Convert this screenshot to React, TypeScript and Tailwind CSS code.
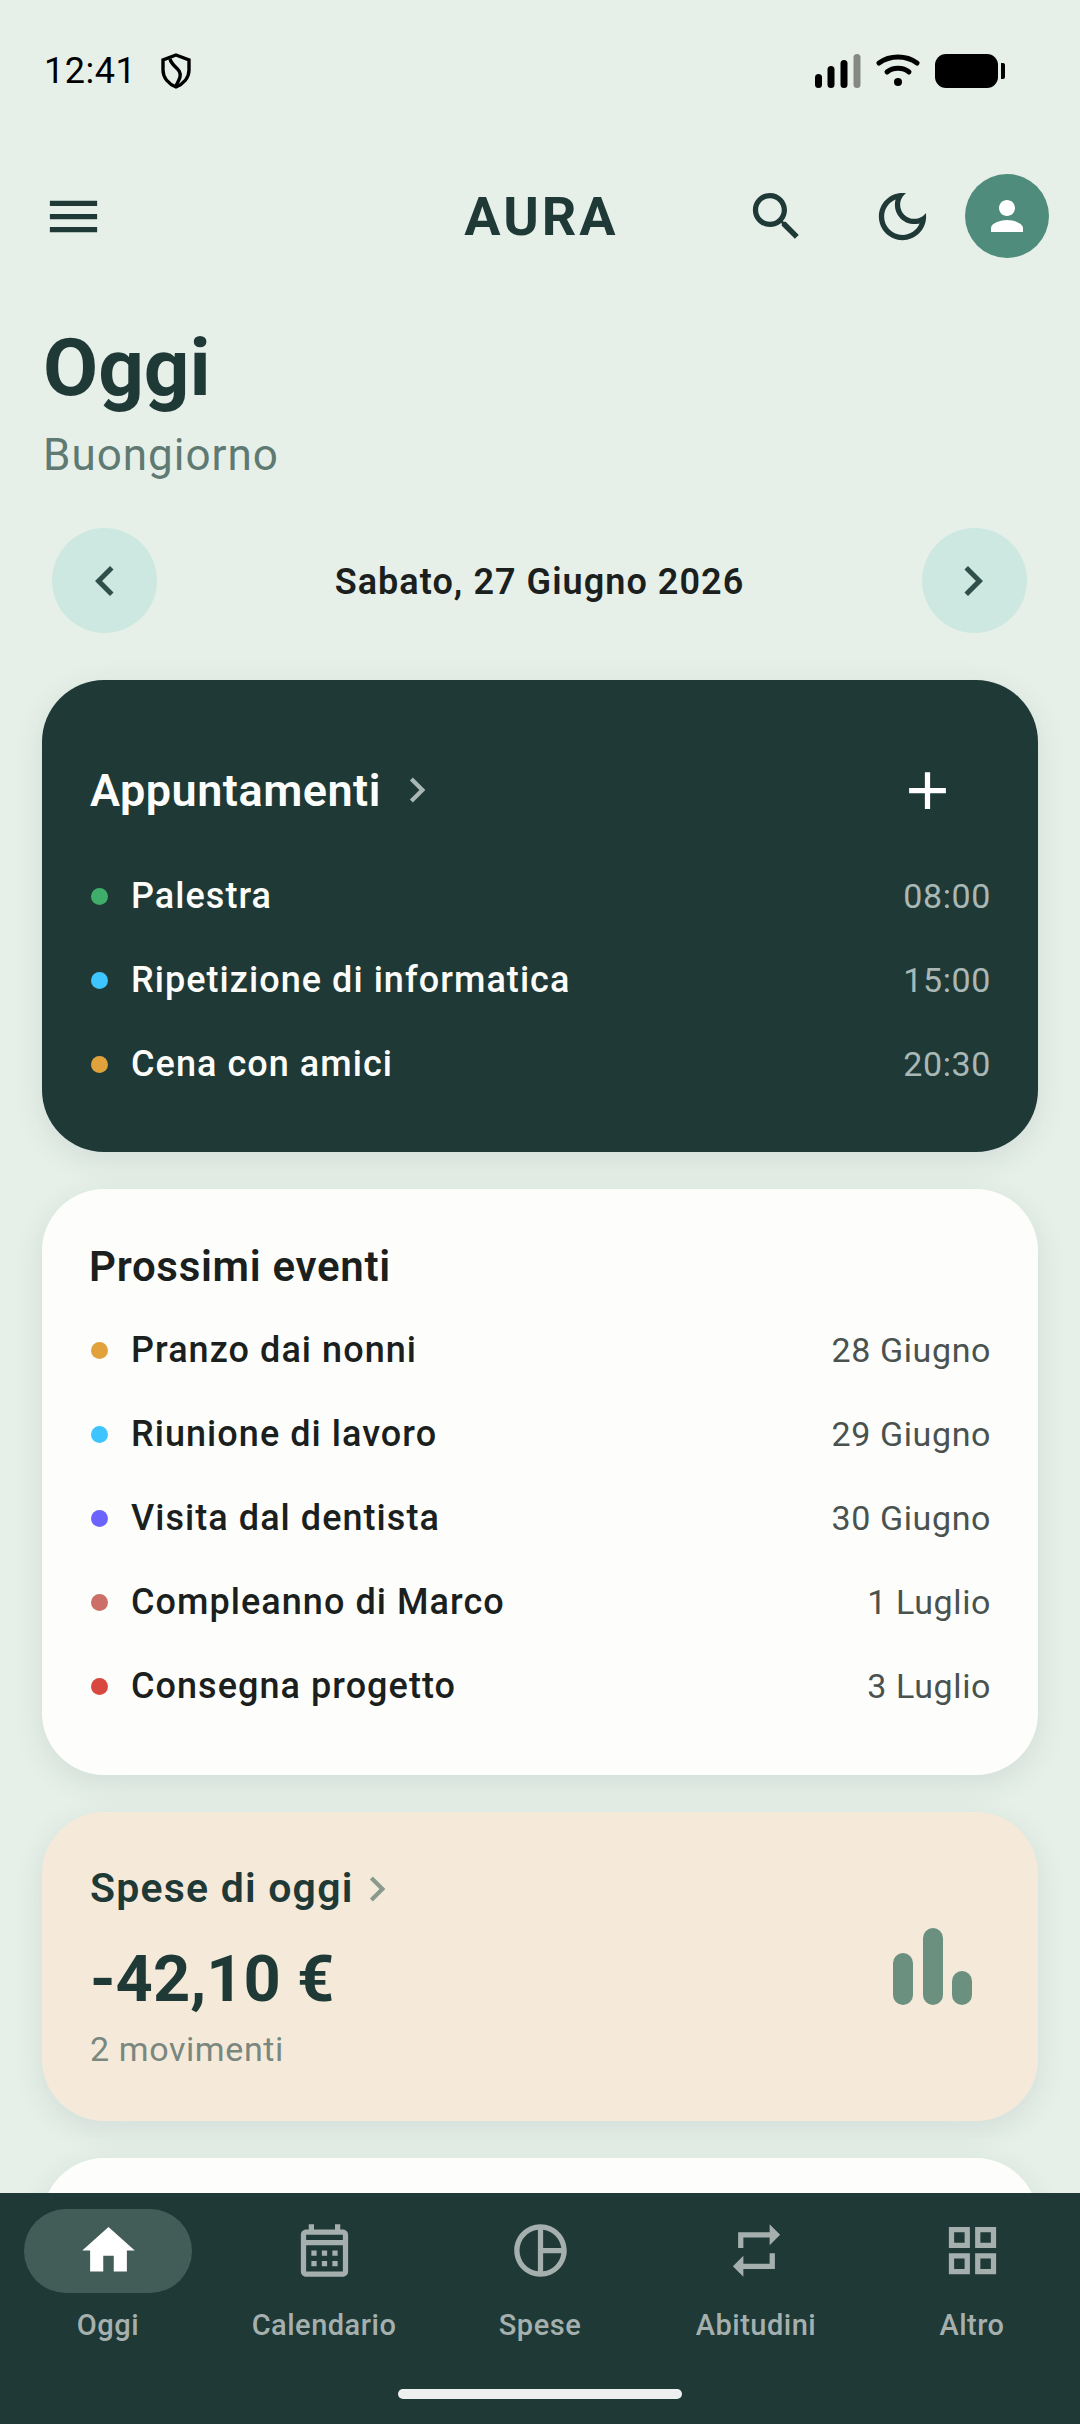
import React from 'react';

const ROBOTO = "font-['Roboto',sans-serif]";

const Icon = ({ d, className }: { d: string; className?: string }) => (
  <svg viewBox="0 0 24 24" fill="currentColor" className={className}>
    <path d={d} />
  </svg>
);

const paths = {
  menu: 'M3 18h18v-2H3v2zm0-5h18v-2H3v2zm0-7v2h18V6H3z',
  search:
    'M15.5 14h-.79l-.28-.27C15.41 12.59 16 11.11 16 9.5 16 5.91 13.09 3 9.5 3S3 5.91 3 9.5 5.91 16 9.5 16c1.61 0 3.09-.59 4.23-1.57l.27.28v.79l5 4.99L20.49 19l-4.99-5zm-6 0C7.01 14 5 11.99 5 9.5S7.01 5 9.5 5 14 7.01 14 9.5 11.99 14 9.5 14z',
  moon: 'M9.37 5.51C9.19 6.15 9.1 6.82 9.1 7.5c0 4.08 3.32 7.4 7.4 7.4.68 0 1.35-.09 1.99-.27C17.45 17.19 14.93 19 12 19c-3.86 0-7-3.14-7-7 0-2.93 1.81-5.45 4.37-6.49zM12 3c-4.97 0-9 4.03-9 9s4.03 9 9 9 9-4.03 9-9c0-.46-.04-.92-.1-1.36-.98 1.37-2.58 2.26-4.4 2.26-2.98 0-5.4-2.42-5.4-5.4 0-1.81.89-3.42 2.26-4.4C12.92 3.04 12.46 3 12 3z',
  person: 'M12 12c2.21 0 4-1.79 4-4s-1.79-4-4-4-4 1.79-4 4 1.79 4 4 4zm0 2c-2.67 0-8 1.34-8 4v2h16v-2c0-2.66-5.33-4-8-4z',
  left: 'M15.41 7.41 14 6l-6 6 6 6 1.41-1.41L10.83 12z',
  right: 'M10 6 8.59 7.41 13.17 12l-4.58 4.59L10 18l6-6z',
  add: 'M19 13h-6v6h-2v-6H5v-2h6V5h2v6h6v2z',
  home: 'M10 20v-6h4v6h5v-8h3L12 3 2 12h3v8z',
  calendar:
    'M19 4h-1V2h-2v2H8V2H6v2H5c-1.11 0-2 .9-2 2v14c0 1.1.89 2 2 2h14c1.1 0 2-.9 2-2V6c0-1.1-.9-2-2-2zm0 16H5V10h14v10zM19 8H5V6h14v2zM7 12h2v2H7zm4 0h2v2h-2zm4 0h2v2h-2zm-8 4h2v2H7zm4 0h2v2h-2zm4 0h2v2h-2z',
  pie: 'M12 2C6.5 2 2 6.5 2 12s4.5 10 10 10 10-4.5 10-10S17.5 2 12 2zm7.93 9H13V4.07c3.61.45 6.48 3.32 6.93 6.93zM4 12c0-4.07 3.06-7.44 7-7.93v15.86c-3.94-.49-7-3.86-7-7.93zm9 7.93V13h6.93c-.45 3.61-3.32 6.48-6.93 6.93z',
  repeat: 'M7 7h10v3l4-4-4-4v3H5v6h2V7zm10 10H7v-3l-4 4 4 4v-3h12v-6h-2v4z',
  grid: 'M3 3v8h8V3H3zm6 6H5V5h4v4zm-6 4v8h8v-8H3zm6 6H5v-4h4v4zm4-16v8h8V3h-8zm6 6h-4V5h4v4zm-6 4v8h8v-8h-8zm6 6h-4v-4h4v4z',
};

const appointments = [
  { name: 'Palestra', time: '08:00', dot: 'bg-[#3FAE6B]' },
  { name: 'Ripetizione di informatica', time: '15:00', dot: 'bg-[#3EC5FF]' },
  { name: 'Cena con amici', time: '20:30', dot: 'bg-[#E2A23B]' },
];

const events = [
  { name: 'Pranzo dai nonni', date: '28 Giugno', dot: 'bg-[#E2A23B]' },
  { name: 'Riunione di lavoro', date: '29 Giugno', dot: 'bg-[#3EC5FF]' },
  { name: 'Visita dal dentista', date: '30 Giugno', dot: 'bg-[#6C63FF]' },
  { name: 'Compleanno di Marco', date: '1 Luglio', dot: 'bg-[#CB6F67]' },
  { name: 'Consegna progetto', date: '3 Luglio', dot: 'bg-[#D9483F]' },
];

const tabs = [
  { label: 'Oggi', icon: paths.home, active: true },
  { label: 'Calendario', icon: paths.calendar },
  { label: 'Spese', icon: paths.pie },
  { label: 'Abitudini', icon: paths.repeat },
  { label: 'Altro', icon: paths.grid },
];

const Row = ({ name, right, dot, dark }: { name: string; right: string; dot: string; dark?: boolean }) => (
  <div className="flex h-[84px] items-center">
    <span className={`ml-[1px] h-[17px] w-[17px] rounded-full ${dot}`} />
    <span className={`ml-[23px] flex-1 text-[36px] font-medium tracking-[1.05px] ${dark ? 'text-[#FCFDFA]' : 'text-[#1B1F1E]'}`}>
      {name}
    </span>
    <span className={`-mr-[1px] text-[34px] tracking-[0.6px] ${dark ? 'text-[#A9B8B5]' : 'text-[#4A5250]'}`}>{right}</span>
  </div>
);

const StatusBar = () => (
  <div className="flex h-[142px] items-center justify-between pl-[44px] pr-[75px]">
    <div className="flex items-center gap-[24px]">
      <span className="text-[36px] tracking-[0.5px] text-black">12:41</span>
      <svg viewBox="0 0 32 36" className="h-[36px] w-[32px]" fill="none" stroke="black" strokeWidth="3.4">
        <path d="M16 2 L29 7 V17 C29 25 23 31 16 34 C9 31 3 25 3 17 V7 Z" />
        <path d="M10 6 C12 14 22 16 20 24 C19 28 17 30 16 33" />
      </svg>
    </div>
    <div className="flex items-center gap-[15px]">
      <svg viewBox="0 0 46 34" className="h-[34px] w-[46px]">
        <rect x="0" y="20" width="7" height="14" rx="3.5" fill="black" />
        <rect x="12.5" y="12" width="7" height="22" rx="3.5" fill="black" />
        <rect x="25.5" y="6" width="7" height="28" rx="3.5" fill="black" />
        <rect x="38.5" y="0" width="7" height="34" rx="3.5" fill="#858885" />
      </svg>
      <svg viewBox="0 0 44 34" className="h-[34px] w-[44px]" fill="none" stroke="black" strokeWidth="5" strokeLinecap="round">
        <path d="M3 9 C14 1 30 1 41 9" />
        <path d="M11 18 C17 13 27 13 33 18" />
        <circle cx="22" cy="28" r="4" fill="black" stroke="none" />
      </svg>
      <div className="flex items-center">
        <div className="h-[34px] w-[63px] rounded-[11px] bg-black" />
        <div className="ml-[3px] h-[16px] w-[4px] rounded-r-[2px] bg-black" />
      </div>
    </div>
  </div>
);

export default function App() {
  return (
    <div className={`relative h-[2424px] w-[1080px] overflow-hidden bg-[#E6F0E9] ${ROBOTO}`}>
      <StatusBar />

      {/* Header */}
      <div className="relative mt-[32px] flex h-[84px] items-center pl-[42px]">
        <Icon d={paths.menu} className="h-[63px] w-[63px] text-[#1F3937]" />
        <div className="absolute left-[3px] right-0 top-[2px] text-center text-[54px] font-bold tracking-[3px] text-[#1F3937]">AURA</div>
        <div className="ml-auto flex items-center pr-[31px]">
          <Icon d={paths.search} className="h-[63px] w-[63px] text-[#1F3937]" />
          <Icon d={paths.moon} className="ml-[63px] h-[63px] w-[63px] text-[#1F3937]" />
          <div className="ml-[31px] flex h-[84px] w-[84px] items-center justify-center rounded-full bg-[#4F8C7C]">
            <Icon d={paths.person} className="h-[48px] w-[48px] text-white" />
          </div>
        </div>
      </div>

      {/* Title */}
      <div className="px-[43px] pt-[66px]">
        <div className="text-[80px] font-bold leading-[88px] text-[#1F3937]">Oggi</div>
        <div className="mt-[15px] text-[44px] leading-[56px] tracking-[1px] text-[#5F7A73]">Buongiorno</div>
      </div>

      {/* Date */}
      <div className="mt-[45px] flex items-center justify-between pl-[52px] pr-[53px]">
        <div className="flex h-[105px] w-[105px] items-center justify-center rounded-full bg-[#CDE8E0]">
          <Icon d={paths.left} className="h-[60px] w-[60px] text-[#2F4F4A]" />
        </div>
        <div className="mt-[2px] text-[36px] font-semibold tracking-[1.05px] text-[#1B1F1E]">Sabato, 27 Giugno 2026</div>
        <div className="flex h-[105px] w-[105px] items-center justify-center rounded-full bg-[#CDE8E0]">
          <Icon d={paths.right} className="-ml-[2px] h-[60px] w-[60px] text-[#2F4F4A]" />
        </div>
      </div>

      <div className="mt-[47px] flex flex-col gap-[37px] px-[42px]">
        {/* Appuntamenti */}
        <div className="h-[472px] rounded-[62px] bg-[#1F3937] px-[48px] pt-[78px] shadow-[0_8px_30px_rgba(31,58,56,0.1)]">
          <div className="flex h-[64px] items-center">
            <span className="mt-[2px] text-[45px] font-semibold tracking-[0.5px] text-[#FCFDFA]">Appuntamenti</span>
            <Icon d={paths.right} className="ml-[11px] h-[50px] w-[50px] text-[#A9B8B5]" />
            <Icon d={paths.add} className="ml-auto mr-[31px] h-[63px] w-[63px] text-white" />
          </div>
          <div className="mt-[32px]">
            {appointments.map((a) => (
              <Row key={a.name} name={a.name} right={a.time} dot={a.dot} dark />
            ))}
          </div>
        </div>

        {/* Prossimi eventi */}
        <div className="h-[586px] rounded-[62px] bg-[#FDFEFB] pl-[47px] pr-[48px] pt-[50px] shadow-[0_8px_30px_rgba(31,58,56,0.1)]">
          <div className="h-[56px] text-[42px] font-semibold leading-[56px] tracking-[0.7px] text-[#1B1F1E]">Prossimi eventi</div>
          <div className="ml-[1px] mt-[13px]">
            {events.map((e) => (
              <Row key={e.name} name={e.name} right={e.date} dot={e.dot} />
            ))}
          </div>
        </div>

        {/* Spese */}
        <div className="flex h-[309px] items-center justify-between rounded-[62px] bg-[#F5EADA] pl-[48px] pr-[66px] shadow-[0_8px_30px_rgba(31,58,56,0.1)]">
          <div className="self-start pt-[49px]">
            <div className="flex h-[56px] items-center">
              <span className="text-[41px] font-semibold tracking-[1.2px] text-[#1F3937]">Spese di oggi</span>
              <Icon d={paths.right} className="-ml-[2px] h-[50px] w-[50px] text-[#8A9A8C]" />
            </div>
            <div className="mt-[22px] text-[65px] font-bold leading-[80px] text-[#1F3937]">-42,10 €</div>
            <div className="mt-[8px] text-[34px] leading-[44px] tracking-[0.6px] text-[#7A877F]">2 movimenti</div>
          </div>
          <div className="flex items-end gap-[9.5px]">
            <div className="h-[52px] w-[20px] rounded-full bg-[#6B9080]" />
            <div className="h-[77px] w-[20px] rounded-full bg-[#6B9080]" />
            <div className="h-[34px] w-[20px] rounded-full bg-[#6B9080]" />
          </div>
        </div>

        <div className="h-[200px] rounded-[62px] bg-[#FDFEFB] shadow-[0_8px_30px_rgba(31,58,56,0.1)]" />
      </div>

      {/* Bottom navigation */}
      <div className="absolute bottom-0 left-0 right-0 h-[231px] bg-[#1F3937]">
        <div className="flex pt-[16px]">
          {tabs.map((t) => (
            <div key={t.label} className="flex w-[216px] flex-col items-center">
              <div className={`flex h-[84px] w-[168px] items-center justify-center rounded-full ${t.active ? 'bg-[#425C58]' : ''}`}>
                <Icon d={t.icon} className={`-mt-[2px] h-[63px] w-[63px] ${t.active ? 'text-white' : 'text-[#A5B0AE]'}`} />
              </div>
              <span className="mt-[11px] text-[29px] font-medium tracking-[0.5px] text-[#A5B0AE]">{t.label}</span>
            </div>
          ))}
        </div>
        <div className="absolute bottom-[25px] left-[398px] h-[10px] w-[284px] rounded-full bg-[#EEF0EF]" />
      </div>
    </div>
  );
}
